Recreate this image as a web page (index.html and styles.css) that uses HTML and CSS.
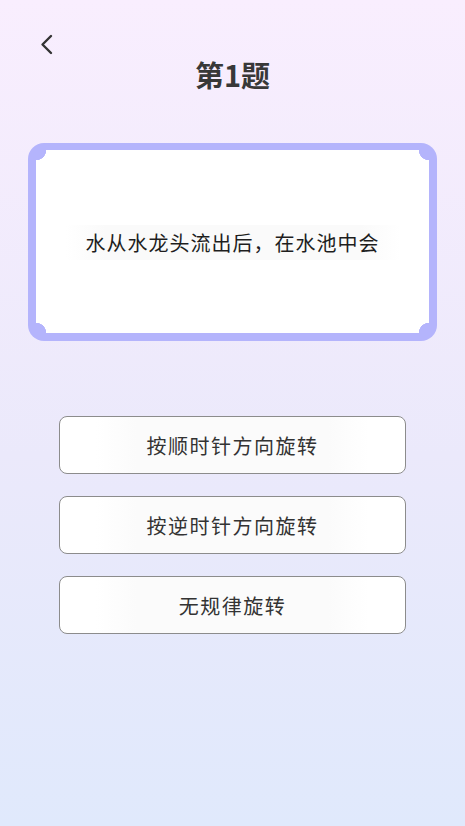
FILE: index.html
```html
<!DOCTYPE html>
<html lang="zh-CN">
<head>
    <meta charset="UTF-8">
    <meta name="viewport" content="width=device-width, initial-scale=1.0">
    <title>第1题</title>
    <link rel="stylesheet" href="styles.css">
</head>
<body>
    <div class="page">
        <div class="topbar">
            <button class="back-btn" type="button" aria-label="返回">
                <svg width="24" height="24" viewBox="0 0 24 24" fill="none">
                    <path d="M17 4 L8.5 12.5 L17 21" stroke="#333" stroke-width="2.4" stroke-linecap="round" stroke-linejoin="round"/>
                </svg>
            </button>
        </div>

        <h1 class="title">第1题</h1>

        <div class="question-frame">
            <div class="question-card">
                <p class="question-text">水从水龙头流出后，在水池中会</p>
            </div>
        </div>

        <div class="options">
            <button class="option" type="button"><span class="option-label">按顺时针方向旋转</span></button>
            <button class="option" type="button"><span class="option-label">按逆时针方向旋转</span></button>
            <button class="option" type="button"><span class="option-label">无规律旋转</span></button>
        </div>
    </div>
</body>
</html>
```

FILE: styles.css
```css
* {
    margin: 0;
    padding: 0;
    box-sizing: border-box;
}

html, body {
    height: 100%;
}

body {
    font-family: "Noto Sans CJK SC", "Noto Sans", sans-serif;
    color: #333;
    background: linear-gradient(180deg, #f9eefe 0%, #ebe9fb 55%, #e0e9fc 100%);
}

.page {
    min-height: 826px;
}

.topbar {
    height: 56px;
    padding: 32px 0 0 34px;
}

.back-btn {
    display: block;
    width: 24px;
    height: 24px;
    border: none;
    background: none;
    cursor: pointer;
}

.back-btn svg {
    display: block;
}

.title {
    margin-top: 4px;
    font-size: 29px;
    line-height: 29px;
    font-weight: bold;
    text-align: center;
    color: #383838;
}

.question-frame {
    --frame: #b4b4fc;
    margin: 54px 28px 0;
    height: 198px;
    padding: 7px 8px 8px;
    background: var(--frame);
    border-radius: 16px;
}

.question-card {
    height: 100%;
    display: flex;
    align-items: center;
    justify-content: center;
    background:
        radial-gradient(circle at top left, var(--frame) 10px, transparent 10.5px),
        radial-gradient(circle at top right, var(--frame) 10px, transparent 10.5px),
        radial-gradient(circle at bottom left, var(--frame) 10px, transparent 10.5px),
        radial-gradient(circle at bottom right, var(--frame) 10px, transparent 10.5px),
        #fff;
}

.question-text {
    width: 336px;
    height: 35px;
    line-height: 35px;
    margin-top: 2px;
    text-align: center;
    font-size: 20px;
    letter-spacing: 1px;
    color: #1e1e1e;
    background: linear-gradient(90deg, #fff 0%, #fafafa 12%, #fafafa 88%, #fff 100%);
}

.options {
    margin: 75px 59px 0;
    display: flex;
    flex-direction: column;
    gap: 22px;
}

.option {
    height: 58px;
    display: flex;
    align-items: center;
    justify-content: center;
    background: #fff;
    border: 1px solid #8c8c8c;
    border-radius: 8px;
    font-family: inherit;
    cursor: pointer;
}

.option-label {
    width: 273px;
    height: 100%;
    display: flex;
    align-items: center;
    justify-content: center;
    font-size: 20px;
    letter-spacing: 1.5px;
    color: #333;
    background: linear-gradient(90deg, #fff 0%, #fbfbfb 15%, #fbfbfb 85%, #fff 100%);
}
```
